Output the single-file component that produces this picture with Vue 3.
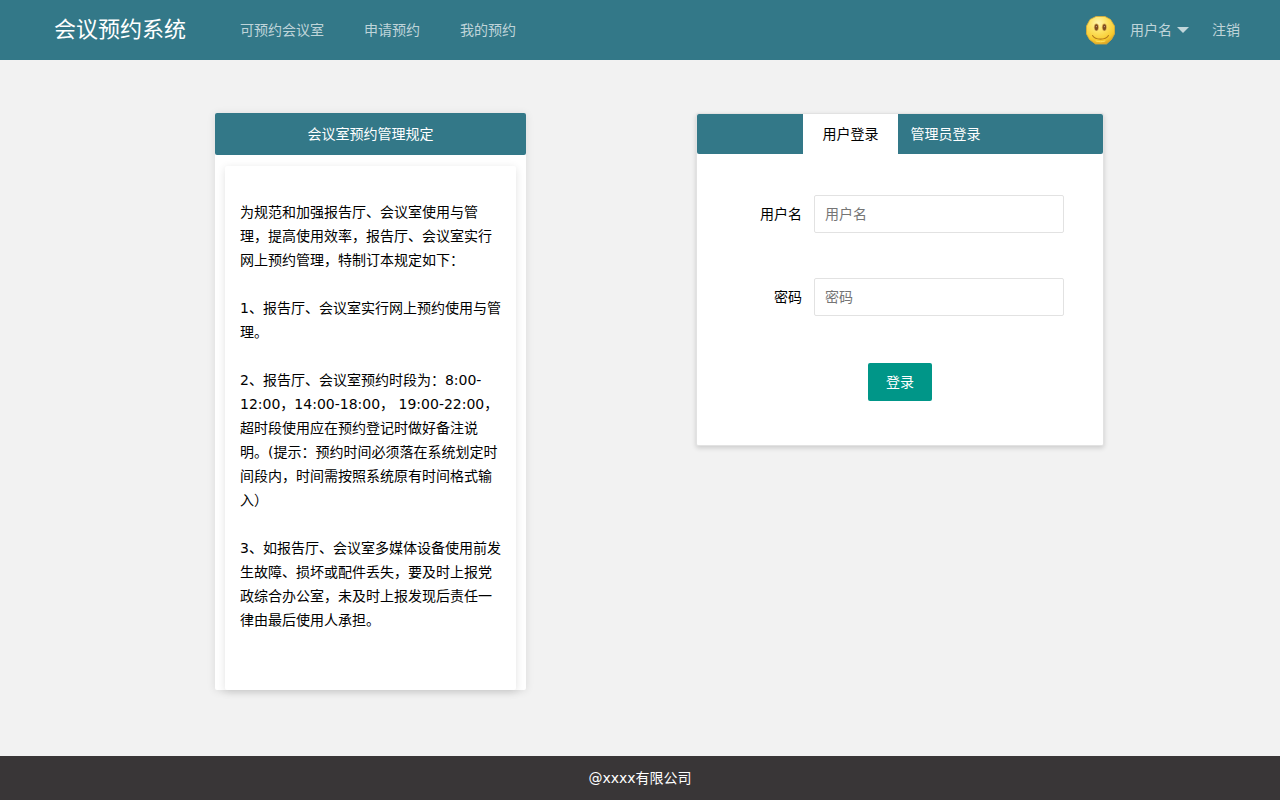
<script setup>
import { ref } from 'vue'

const navItems = ['可预约会议室', '申请预约', '我的预约']
const rules = [
  '为规范和加强报告厅、会议室使用与管理，提高使用效率，报告厅、会议室实行网上预约管理，特制订本规定如下：',
  '1、报告厅、会议室实行网上预约使用与管理。',
  '2、报告厅、会议室预约时段为：8:00-12:00，14:00-18:00， 19:00-22:00，超时段使用应在预约登记时做好备注说明。(提示：预约时间必须落在系统划定时间段内，时间需按照系统原有时间格式输入）',
  '3、如报告厅、会议室多媒体设备使用前发生故障、损坏或配件丢失，要及时上报党政综合办公室，未及时上报发现后责任一律由最后使用人承担。',
]

const tabs = ['用户登录', '管理员登录']
const activeTab = ref(0)
const username = ref('')
const password = ref('')
</script>

<template>
  <div class="page">
    <header class="header">
      <div class="logo">会议预约系统</div>
      <nav class="nav">
        <a v-for="item in navItems" :key="item" href="#">{{ item }}</a>
      </nav>
      <div class="account">
        <a class="user" href="#">
          <svg class="avatar" viewBox="0 0 30 30" aria-hidden="true">
            <defs>
              <radialGradient id="face" cx="42%" cy="25%" r="78%">
                <stop offset="0" stop-color="#fff6b0" />
                <stop offset="0.4" stop-color="#fde263" />
                <stop offset="0.8" stop-color="#f8cb2e" />
                <stop offset="1" stop-color="#dca324" />
              </radialGradient>
            </defs>
            <path d="M10 1.500h9l5.500 3 4 6.500v8l-3 5.500-5 4.500H9.500l-6-4.500-3-5.500v-8l3.500-6.500z" fill="url(#face)" stroke="#dfae35" stroke-width="0.8" stroke-linejoin="round" />
            <ellipse cx="10.400" cy="12.300" rx="2.500" ry="3.700" fill="#dcb050" />
            <ellipse cx="18.400" cy="12.300" rx="2.500" ry="3.700" fill="#dcb050" />
            <ellipse cx="10.400" cy="12.300" rx="1.700" ry="3.100" fill="#7d4c20" />
            <ellipse cx="18.400" cy="12.300" rx="1.700" ry="3.100" fill="#7d4c20" />
            <circle cx="10.400" cy="11.600" r="0.6" fill="#c9a98a" />
            <circle cx="18.400" cy="11.600" r="0.6" fill="#c9a98a" />
            <path d="M6.500 20.500c3 4.800 13 4.800 16 0" fill="none" stroke="#b57a1c" stroke-width="1.100" stroke-linecap="round" />
            <path d="M10 26c3 1 6 1 9 0" fill="none" stroke="#fde263" stroke-width="1" stroke-linecap="round" />
          </svg>
          <span>用户名</span>
          <span class="caret"></span>
        </a>
        <a href="#">注销</a>
      </div>
    </header>

    <main class="main">
      <section class="notice">
        <h2 class="notice-title">会议室预约管理规定</h2>
        <div class="notice-body">
          <p v-for="rule in rules" :key="rule">{{ rule }}</p>
        </div>
      </section>

      <section class="login">
        <div class="tabs" role="tablist">
          <button
            v-for="(tab, i) in tabs"
            :key="tab"
            type="button"
            role="tab"
            :aria-selected="activeTab === i"
            :class="['tab', { active: activeTab === i }]"
            @click="activeTab = i"
          >{{ tab }}</button>
        </div>
        <form class="form" @submit.prevent>
          <div class="field">
            <label for="username">用户名</label>
            <input id="username" v-model="username" type="text" placeholder="用户名" />
          </div>
          <div class="field">
            <label for="password">密码</label>
            <input id="password" v-model="password" type="password" placeholder="密码" />
          </div>
          <button class="submit" type="submit">登录</button>
        </form>
      </section>
    </main>

    <footer class="footer">@xxxx有限公司</footer>
  </div>
</template>

<style>
body {
  background: #f2f2f2;
}
</style>

<style scoped>
.page {
  display: flex;
  flex-direction: column;
  min-height: 100vh;
  font: 14px/24px "DejaVu Sans", "Noto Sans CJK SC", sans-serif;
  color: #000;
}
.page * {
  box-sizing: border-box;
}
button,
input {
  font: inherit;
}
.header {
  display: flex;
  align-items: center;
  height: 60px;
  padding: 0 40px 0 54px;
  background: #337888;
}
.logo {
  font-size: 22px;
  color: #fff;
}
.nav {
  display: flex;
  gap: 40px;
  margin-left: 54px;
}
.header a {
  color: rgba(255, 255, 255, 0.7);
  text-decoration: none;
}
.account {
  display: flex;
  align-items: center;
  gap: 23px;
  margin-left: auto;
}
.user {
  display: flex;
  align-items: center;
}
.avatar {
  width: 30px;
  height: 30px;
  margin-right: 14px;
}
.caret {
  margin-left: 5px;
  border: 6px solid transparent;
  border-top-color: rgba(255, 255, 255, 0.7);
  border-bottom-width: 0;
}
.main {
  display: grid;
  grid-template-columns: 215fr 311fr 170fr 408fr 176fr;
  align-items: start;
  flex: 1;
  padding: 53px 0 66px;
}
.notice,
.login {
  background: #fff;
  border-radius: 2px;
}
.notice {
  grid-column: 2;
  box-shadow: 0 1px 8px rgba(0, 0, 0, 0.1);
}
.notice-title {
  margin: 0;
  border-radius: 2px;
  background: #337888;
  color: #fff;
  font-size: 14px;
  font-weight: 400;
  line-height: 42px;
  text-align: center;
}
.notice-body {
  margin: 11px 10px 0;
  padding: 34px 15px 58px;
  border-radius: 2px;
  background: #fff;
  box-shadow: 0 2px 8px rgba(0, 0, 0, 0.12);
}
.notice-body p {
  margin: 0;
}
.notice-body p + p {
  margin-top: 24px;
}
.login {
  grid-column: 4;
  border: 1px solid #e2e2e2;
  box-shadow: 0 2px 5px rgba(0, 0, 0, 0.16);
}
.tabs {
  display: flex;
  justify-content: center;
  height: 40px;
  border-radius: 2px;
  background: #337888;
}
.tab {
  height: 40px;
  padding: 0 17px 0 13px;
  border: 0;
  background: none;
  color: #fff;
  line-height: 40px;
}
.tab.active {
  padding: 0 19px 0 20px;
  background: #fff;
  color: #000;
}
.form {
  display: flex;
  flex-direction: column;
  padding: 41px 39px 44px;
}
.field {
  display: flex;
  align-items: center;
  justify-content: flex-end;
  gap: 12px;
  margin-bottom: 45px;
}
.field input {
  width: 250px;
  height: 38px;
  padding: 0 10px;
  border: 1px solid #e2e2e2;
  border-radius: 2px;
  background: #fff;
  outline: none;
}
.field input::placeholder {
  color: #757575;
}
.submit {
  align-self: center;
  height: 38px;
  margin-top: 2px;
  padding: 0 18px;
  border: 0;
  border-radius: 2px;
  background: #009688;
  color: #fff;
}
.footer {
  background: #393637;
  color: #fff;
  line-height: 44px;
  text-align: center;
}
</style>
